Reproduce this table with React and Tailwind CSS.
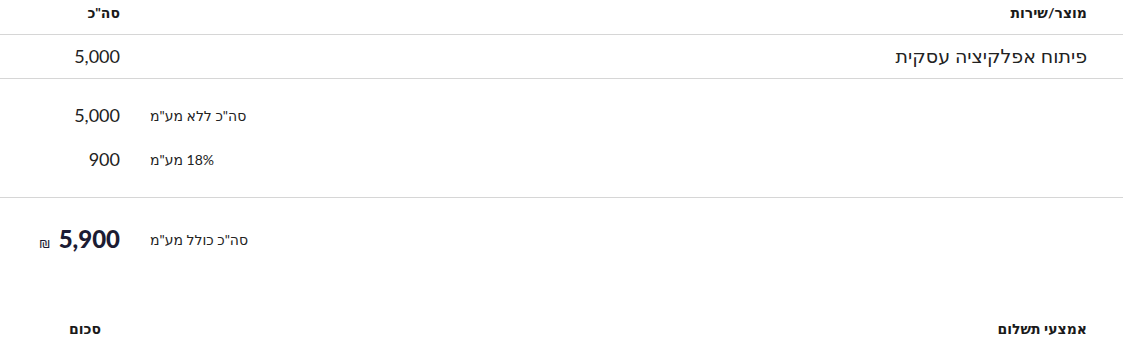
import React from "react";

export default function App() {
  return (
    <div dir="rtl" className="w-full bg-white text-[#222] font-['Lato','DejaVu_Sans',sans-serif]">
      <div className="h-[35px] border-b border-[#d6d6d6] flex justify-between items-start pt-[3px] pr-9 pl-9 text-[14px] leading-5 font-bold text-[#1a1a1a]">
        <div>מוצר/שירות</div>
        <div className="w-[84px] text-right">סה"כ</div>
      </div>
      <div className="h-[44px] border-b border-[#d6d6d6] flex justify-between items-center pr-9 pl-9">
        <div className="text-[19px]">פיתוח אפלקיציה עסקית</div>
        <div className="w-[84px] text-right text-[18px]">5,000</div>
      </div>
      <div className="pt-[14px] pb-[16px] border-b border-[#d6d6d6] pl-9">
        <div className="h-[44px] flex justify-end items-center gap-[30px]">
          <div className="text-[14px]">סה"כ ללא מע"מ</div>
          <div className="w-[84px] text-right text-[18px]">5,000</div>
        </div>
        <div className="h-[44px] flex justify-end items-center gap-[30px]">
          <div className="text-[14px]">18% מע"מ</div>
          <div className="w-[84px] text-right text-[18px]">900</div>
        </div>
      </div>
      <div className="pt-[19px] pl-9">
        <div className="h-[44px] flex justify-end items-center gap-[30px]">
          <div className="text-[14px]">סה"כ כולל מע"מ</div>
          <div className="w-[84px] flex justify-start items-baseline gap-[8px] text-[#1c1c33]">
            <span className="text-[24px] font-black">5,900</span>
            <span className="text-[14px]">₪</span>
          </div>
        </div>
      </div>
      <div className="mt-[58px] flex justify-between items-center pr-9 pl-9 text-[14px] leading-5 font-bold text-[#1a1a1a]">
        <div>אמצעי תשלום</div>
        <div className="w-[65px] text-right">סכום</div>
      </div>
    </div>
  );
}
